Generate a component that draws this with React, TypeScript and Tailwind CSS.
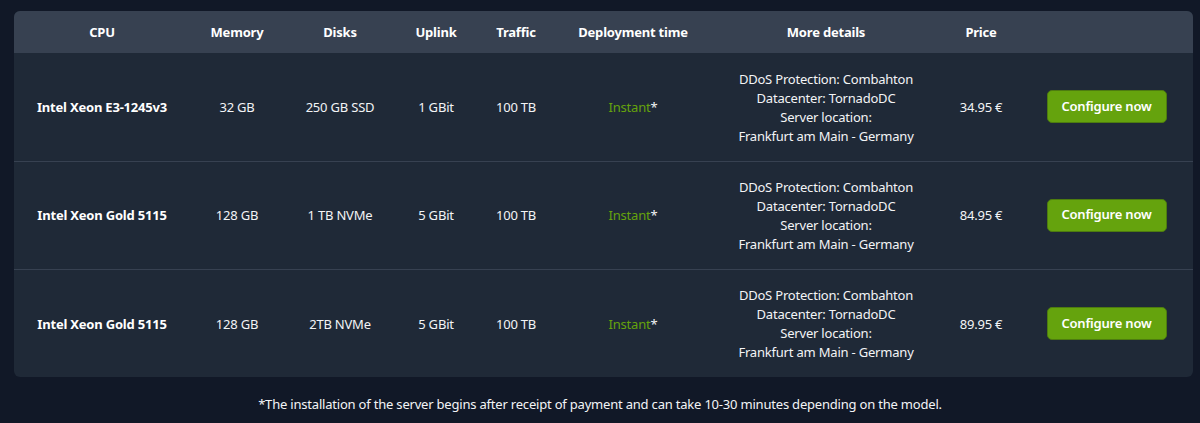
import React from "react"

type Server = {
  cpu: string
  memory: string
  disk: string
  uplink: string
  traffic: string
  price: string
}

const servers: Server[] = [
  { cpu: "Intel Xeon E3-1245v3", memory: "32 GB", disk: "250 GB SSD", uplink: "1 GBit", traffic: "100 TB", price: "34.95 €" },
  { cpu: "Intel Xeon Gold 5115", memory: "128 GB", disk: "1 TB NVMe", uplink: "5 GBit", traffic: "100 TB", price: "84.95 €" },
  { cpu: "Intel Xeon Gold 5115", memory: "128 GB", disk: "2TB NVMe", uplink: "5 GBit", traffic: "100 TB", price: "89.95 €" },
]

const headers = ["CPU", "Memory", "Disks", "Uplink", "Traffic", "Deployment time", "More details", "Price", ""]
const widths = [176, 94, 112, 80, 80, 154, 232, 78, 173]

export default function App() {
  return (
    <div className="min-h-[423px] bg-[#111827] pt-[11px] font-['Noto_Sans',sans-serif] text-[13px] tracking-[-0.2px] text-[#f3f4f6]">
      <div className="ml-[14px] w-[1179px] overflow-hidden rounded-md bg-[#1f2937]">
        <table className="w-full table-fixed border-collapse text-center">
          <colgroup>
            {widths.map((w, i) => (
              <col key={i} style={{ width: w }} />
            ))}
          </colgroup>
          <thead>
            <tr className="h-[42px] bg-[#374151]">
              {headers.map((h, i) => (
                <th key={i} className="pt-[2px] font-bold text-white">
                  {h}
                </th>
              ))}
            </tr>
          </thead>
          <tbody>
            {servers.map((s, i) => (
              <tr key={i} className={i > 0 ? "h-[108px] border-t border-[#374151]" : "h-[108px]"}>
                <td className="pt-[2px] font-bold text-white">{s.cpu}</td>
                <td className="pt-[2px]">{s.memory}</td>
                <td className="pt-[2px]">{s.disk}</td>
                <td className="pt-[2px]">{s.uplink}</td>
                <td className="pt-[2px]">{s.traffic}</td>
                <td className="pt-[2px]">
                  <span className="text-[#65a30d]">Instant</span>*
                </td>
                <td className="pt-[2px] leading-[19px]">
                  DDoS Protection: Combahton
                  <br />
                  Datacenter: TornadoDC
                  <br />
                  Server location:
                  <br />
                  Frankfurt am Main - Germany
                </td>
                <td className="pt-[2px]">{s.price}</td>
                <td>
                  <button
                    type="button"
                    className="h-[33px] w-[120px] rounded-[5px] border border-[#4d7c0f] bg-[#65a30d] font-semibold text-white"
                  >
                    Configure now
                  </button>
                </td>
              </tr>
            ))}
          </tbody>
        </table>
      </div>
      <p className="pt-[18px] text-center text-[#f3f4f6]">
        *The installation of the server begins after receipt of payment and can take 10-30 minutes depending on the model.
      </p>
    </div>
  )
}
